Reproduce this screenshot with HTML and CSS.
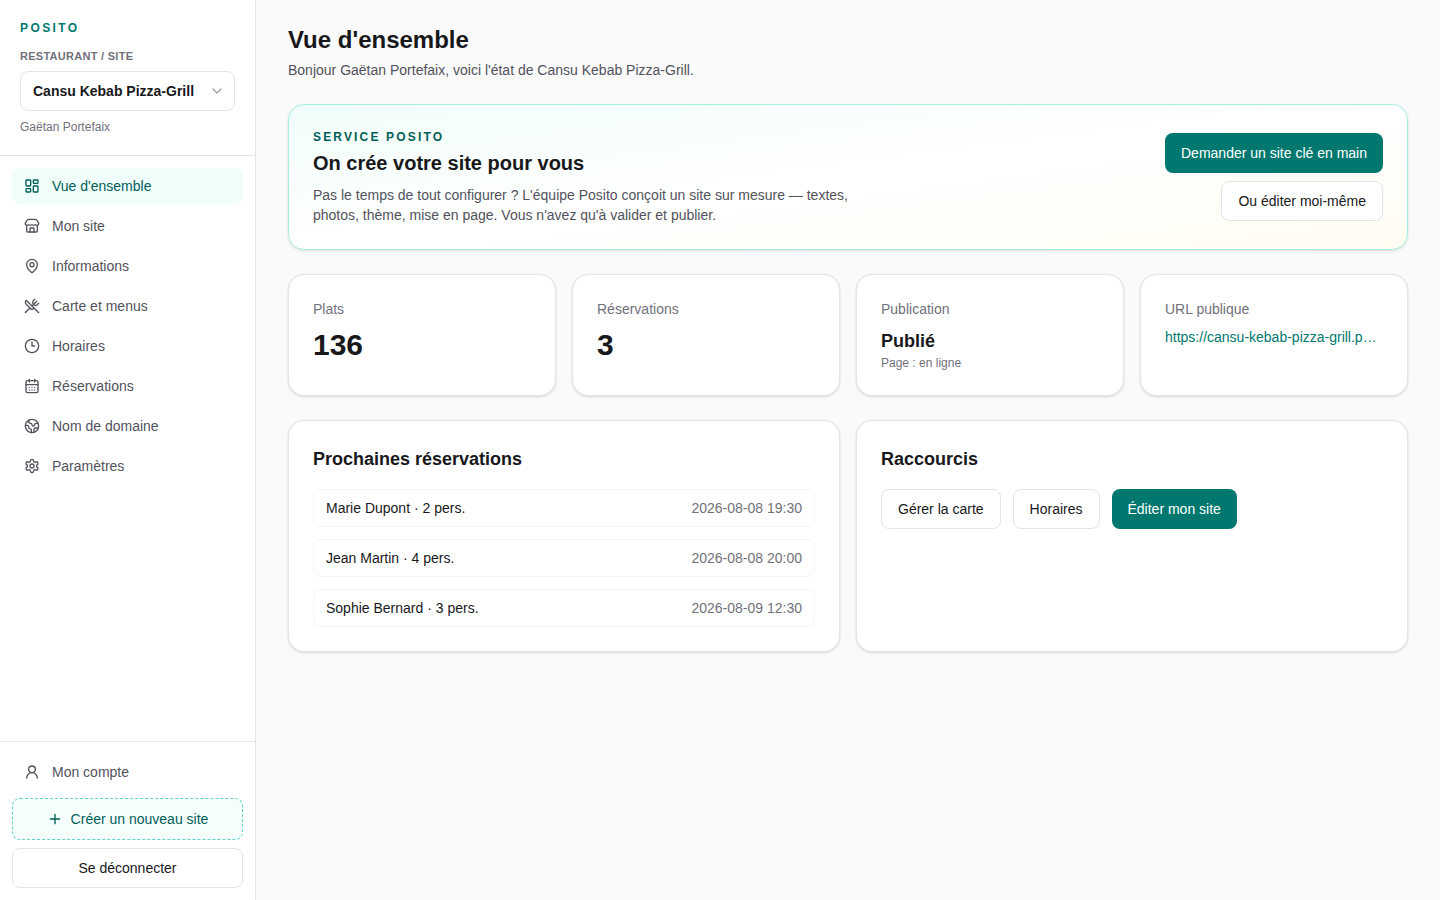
FILE: index.html
```html
<!DOCTYPE html>
<html lang="fr">
<head>
    <meta charset="UTF-8">
    <meta name="viewport" content="width=device-width, initial-scale=1.0">
    <title>Posito</title>

    <link rel="stylesheet" href="styles.css">
</head>
<body>
    <aside class="sidebar">
        <div class="sidebar-head">
            <p class="brand">POSITO</p>
            <label class="site-label" for="site">RESTAURANT / SITE</label>
            <div class="site-select">
                <select id="site" name="site">
                    <option>Cansu Kebab Pizza-Grill</option>
                </select>
                <svg class="chevron" viewBox="0 0 24 24" aria-hidden="true"><path d="m6 9 6 6 6-6"/></svg>
            </div>
            <p class="owner">Gaëtan Portefaix</p>
        </div>

        <nav class="menu">
            <a class="menu-link active" href="#" aria-current="page">
                <svg class="icon" viewBox="0 0 24 24" aria-hidden="true"><rect width="7" height="9" x="3" y="3" rx="1"/><rect width="7" height="5" x="14" y="3" rx="1"/><rect width="7" height="9" x="14" y="12" rx="1"/><rect width="7" height="5" x="3" y="16" rx="1"/></svg>
                Vue d'ensemble
            </a>
            <a class="menu-link" href="#">
                <svg class="icon" viewBox="0 0 24 24" aria-hidden="true"><path d="M15 21v-5a1 1 0 0 0-1-1h-4a1 1 0 0 0-1 1v5"/><path d="M17.774 10.31a1.12 1.12 0 0 0-1.549 0 2.5 2.5 0 0 1-3.451 0 1.12 1.12 0 0 0-1.548 0 2.5 2.5 0 0 1-3.452 0 1.12 1.12 0 0 0-1.549 0 2.5 2.5 0 0 1-3.77-3.248l2.889-4.184A2 2 0 0 1 7 2h10a2 2 0 0 1 1.653.873l2.895 4.192a2.5 2.5 0 0 1-3.774 3.244"/><path d="M4 10.95V19a2 2 0 0 0 2 2h12a2 2 0 0 0 2-2v-8.05"/></svg>
                Mon site
            </a>
            <a class="menu-link" href="#">
                <svg class="icon" viewBox="0 0 24 24" aria-hidden="true"><path d="M20 10c0 4.993-5.539 10.193-7.399 11.799a1 1 0 0 1-1.202 0C9.539 20.193 4 14.993 4 10a8 8 0 0 1 16 0"/><circle cx="12" cy="10" r="3"/></svg>
                Informations
            </a>
            <a class="menu-link" href="#">
                <svg class="icon" viewBox="0 0 24 24" aria-hidden="true"><path d="m16 2-2.3 2.3a3 3 0 0 0 0 4.2l1.8 1.8a3 3 0 0 0 4.2 0L22 8"/><path d="M15 15 3.3 3.3a4.2 4.2 0 0 0 0 6l7.3 7.3c.7.7 2 .7 2.8 0L15 15Zm0 0 7 7"/><path d="m2.1 21.8 6.4-6.3"/><path d="m19 5-7 7"/></svg>
                Carte et menus
            </a>
            <a class="menu-link" href="#">
                <svg class="icon" viewBox="0 0 24 24" aria-hidden="true"><circle cx="12" cy="12" r="10"/><path d="M12 6v6h4"/></svg>
                Horaires
            </a>
            <a class="menu-link" href="#">
                <svg class="icon" viewBox="0 0 24 24" aria-hidden="true"><path d="M8 2v4M16 2v4"/><rect width="18" height="18" x="3" y="4" rx="2"/><path d="M3 10h18"/><path d="M8 14h.01M12 14h.01M16 14h.01M8 18h.01M12 18h.01M16 18h.01"/></svg>
                Réservations
            </a>
            <a class="menu-link" href="#">
                <svg class="icon" viewBox="0 0 24 24" aria-hidden="true"><path d="M21.54 15H17a2 2 0 0 0-2 2v4.54"/><path d="M7 3.34V5a3 3 0 0 0 3 3a2 2 0 0 1 2 2c0 1.1.9 2 2 2a2 2 0 0 0 2-2c0-1.1.9-2 2-2h3.17"/><path d="M11 21.95V18a2 2 0 0 0-2-2a2 2 0 0 1-2-2v-1a2 2 0 0 0-2-2H2.05"/><circle cx="12" cy="12" r="10"/></svg>
                Nom de domaine
            </a>
            <a class="menu-link" href="#">
                <svg class="icon" viewBox="0 0 24 24" aria-hidden="true"><path d="M12.22 2h-.44a2 2 0 0 0-2 2v.18a2 2 0 0 1-1 1.73l-.43.25a2 2 0 0 1-2 0l-.15-.08a2 2 0 0 0-2.73.73l-.22.38a2 2 0 0 0 .73 2.73l.15.1a2 2 0 0 1 1 1.72v.51a2 2 0 0 1-1 1.74l-.15.09a2 2 0 0 0-.73 2.73l.22.38a2 2 0 0 0 2.73.73l.15-.08a2 2 0 0 1 2 0l.43.25a2 2 0 0 1 1 1.73V20a2 2 0 0 0 2 2h.44a2 2 0 0 0 2-2v-.18a2 2 0 0 1 1-1.73l.43-.25a2 2 0 0 1 2 0l.15.08a2 2 0 0 0 2.73-.73l.22-.39a2 2 0 0 0-.73-2.73l-.15-.08a2 2 0 0 1-1-1.74v-.5a2 2 0 0 1 1-1.74l.15-.09a2 2 0 0 0 .73-2.73l-.22-.38a2 2 0 0 0-2.73-.73l-.15.08a2 2 0 0 1-2 0l-.43-.25a2 2 0 0 1-1-1.73V4a2 2 0 0 0-2-2z"/><circle cx="12" cy="12" r="3"/></svg>
                Paramètres
            </a>
        </nav>

        <div class="sidebar-foot">
            <a class="menu-link" href="#">
                <svg class="icon" viewBox="0 0 24 24" aria-hidden="true"><circle cx="12" cy="8" r="5"/><path d="M20 21a8 8 0 0 0-16 0"/></svg>
                Mon compte
            </a>
            <a class="new-site" href="#">
                <svg class="icon" viewBox="0 0 24 24" aria-hidden="true"><path d="M5 12h14M12 5v14"/></svg>
                Créer un nouveau site
            </a>
            <button class="btn" type="button">Se déconnecter</button>
        </div>
    </aside>

    <main>
        <header>
            <h1>Vue d'ensemble</h1>
            <p class="intro">Bonjour Gaëtan Portefaix, voici l'état de Cansu Kebab Pizza-Grill.</p>
        </header>

        <section class="card service">
            <div class="service-text">
                <p class="eyebrow">SERVICE POSITO</p>
                <h2>On crée votre site pour vous</h2>
                <p class="service-desc">Pas le temps de tout configurer ? L'équipe Posito conçoit un site sur mesure — textes, photos, thème, mise en page. Vous n'avez qu'à valider et publier.</p>
            </div>
            <div class="service-actions">
                <a class="btn primary" href="#">Demander un site clé en main</a>
                <a class="btn" href="#">Ou éditer moi-même</a>
            </div>
        </section>

        <section class="stats">
            <div class="card">
                <p class="stat-label">Plats</p>
                <p class="stat-value">136</p>
            </div>
            <div class="card">
                <p class="stat-label">Réservations</p>
                <p class="stat-value">3</p>
            </div>
            <div class="card">
                <p class="stat-label">Publication</p>
                <p class="stat-status">Publié</p>
                <p class="stat-note">Page : en ligne</p>
            </div>
            <div class="card">
                <p class="stat-label">URL publique</p>
                <a class="stat-url" href="#">https://cansu-kebab-pizza-grill.p…</a>
            </div>
        </section>

        <section class="panels">
            <div class="card">
                <h3>Prochaines réservations</h3>
                <ul class="bookings">
                    <li><span>Marie Dupont · 2 pers.</span><time datetime="2026-08-08T19:30">2026-08-08 19:30</time></li>
                    <li><span>Jean Martin · 4 pers.</span><time datetime="2026-08-08T20:00">2026-08-08 20:00</time></li>
                    <li><span>Sophie Bernard · 3 pers.</span><time datetime="2026-08-09T12:30">2026-08-09 12:30</time></li>
                </ul>
            </div>
            <div class="card">
                <h3>Raccourcis</h3>
                <div class="shortcuts">
                    <a class="btn" href="#">Gérer la carte</a>
                    <a class="btn" href="#">Horaires</a>
                    <a class="btn primary" href="#">Éditer mon site</a>
                </div>
            </div>
        </section>
    </main>
</body>
</html>
```
FILE: styles.css
```css
:root {
    --teal: #00786f;
    --teal-dark: #005f5a;
    --teal-light: #f0fdfa;
    --text: #18181b;
    --text-soft: #52525c;
    --muted: #71717b;
    --border: #e4e4e7;
}

* {
    box-sizing: border-box;
}

body {
    display: flex;
    min-height: 100vh;
    margin: 0;
    background: #fafafa;
    color: var(--text);
    font: 14px/20px "Liberation Sans", Arial, sans-serif;
}

h1, h2, h3, p, ul {
    margin: 0;
    padding: 0;
}

a {
    color: inherit;
    text-decoration: none;
}

.icon, .chevron {
    width: 16px;
    height: 16px;
    flex-shrink: 0;
    fill: none;
    stroke: currentColor;
    stroke-width: 2;
    stroke-linecap: round;
    stroke-linejoin: round;
}

/* Sidebar */
.sidebar {
    display: flex;
    flex-direction: column;
    width: 256px;
    flex-shrink: 0;
    background: white;
    border-right: 1px solid var(--border);
}

.sidebar-head {
    display: flex;
    flex-direction: column;
    padding: 20px;
    border-bottom: 1px solid var(--border);
}

.brand {
    color: var(--teal);
    font-size: 12px;
    line-height: 16px;
    font-weight: bold;
    letter-spacing: 0.2em;
}

.site-label {
    margin: 12px 0 6px;
    color: var(--muted);
    font-size: 11px;
    line-height: 17px;
    font-weight: bold;
    letter-spacing: 0.025em;
}

.site-select {
    display: grid;
    align-items: center;

    & > * {
        grid-area: 1 / 1;
    }

    & select {
        appearance: none;
        width: 100%;
        height: 40px;
        padding: 0 32px 0 12px;
        border: 1px solid var(--border);
        border-radius: 8px;
        background: white;
        color: var(--text);
        font: inherit;
        font-weight: bold;
    }
}

.chevron {
    justify-self: end;
    margin-right: 10px;
    color: #9f9fa9;
    pointer-events: none;
}

.owner {
    margin-top: 8px;
    color: var(--muted);
    font-size: 12px;
    line-height: 16px;
}

.menu {
    display: flex;
    flex-direction: column;
    flex: 1;
    gap: 4px;
    padding: 12px;
}

.menu-link {
    display: flex;
    align-items: center;
    gap: 12px;
    padding: 8px 12px;
    border-radius: 8px;
    color: var(--text-soft);

    &.active {
        background: var(--teal-light);
        color: var(--teal-dark);
    }
}

.sidebar-foot {
    display: flex;
    flex-direction: column;
    gap: 8px;
    padding: 12px;
    border-top: 1px solid var(--border);
}

.new-site {
    display: flex;
    align-items: center;
    justify-content: center;
    gap: 8px;
    padding: 10px 12px;
    border: 1px dashed #5fd3c6;
    border-radius: 8px;
    background: #f6fefc;
    color: var(--teal-dark);
}

.btn {
    display: inline-flex;
    align-items: center;
    justify-content: center;
    height: 40px;
    padding: 0 16px;
    border: 1px solid var(--border);
    border-radius: 8px;
    background: white;
    color: var(--text);
    font: inherit;
    white-space: nowrap;

    &.primary {
        border: 0;
        background: var(--teal);
        color: white;
    }
}

/* Content */
main {
    display: flex;
    flex-direction: column;
    flex: 1;
    min-width: 0;
    gap: 24px;
    padding: 24px 32px;
}

h1 {
    font-size: 24px;
    line-height: 32px;
}

.intro {
    margin-top: 4px;
    color: var(--text-soft);
}

.card {
    min-width: 0;
    padding: 24px;
    border: 1px solid var(--border);
    border-radius: 16px;
    background: white;
    box-shadow: 0 1px 3px rgb(0 0 0 / 10%), 0 1px 2px -1px rgb(0 0 0 / 10%);
}

.service {
    display: flex;
    align-items: center;
    justify-content: space-between;
    gap: 16px;
    border-color: #a5efe1;
    background: linear-gradient(to bottom right, #f0fdfa, white, #fffcf2);
}

.service-text {
    max-width: 576px;
}

.eyebrow {
    color: var(--teal-dark);
    font-size: 12px;
    line-height: 16px;
    font-weight: bold;
    letter-spacing: 0.18em;
}

h2 {
    margin-top: 4px;
    font-size: 20px;
    line-height: 28px;
}

.service-desc {
    margin-top: 8px;
    color: var(--text-soft);
}

.service-actions {
    display: flex;
    flex-direction: column;
    align-items: flex-end;
    gap: 8px;
}

.stats {
    display: grid;
    grid-template-columns: repeat(4, minmax(0, 1fr));
    gap: 16px;
}

.stat-label {
    margin-bottom: 8px;
    color: var(--muted);
}

.stat-value {
    font-size: 30px;
    line-height: 36px;
    font-weight: bold;
}

.stat-status {
    font-size: 18px;
    line-height: 28px;
    font-weight: bold;
}

.stat-note {
    color: var(--muted);
    font-size: 12px;
    line-height: 16px;
}

.stat-url {
    display: block;
    overflow: hidden;
    color: var(--teal);
    text-overflow: ellipsis;
    white-space: nowrap;
}

.panels {
    display: grid;
    grid-template-columns: repeat(2, minmax(0, 1fr));
    gap: 16px;
}

h3 {
    margin-bottom: 16px;
    font-size: 18px;
    line-height: 28px;
}

.bookings {
    display: flex;
    flex-direction: column;
    gap: 12px;
    list-style: none;

    & li {
        display: flex;
        justify-content: space-between;
        padding: 8px 12px;
        border: 1px solid #f4f4f5;
        border-radius: 8px;
    }

    & time {
        color: var(--muted);
    }
}

.shortcuts {
    display: flex;
    flex-wrap: wrap;
    gap: 12px;
}
```
